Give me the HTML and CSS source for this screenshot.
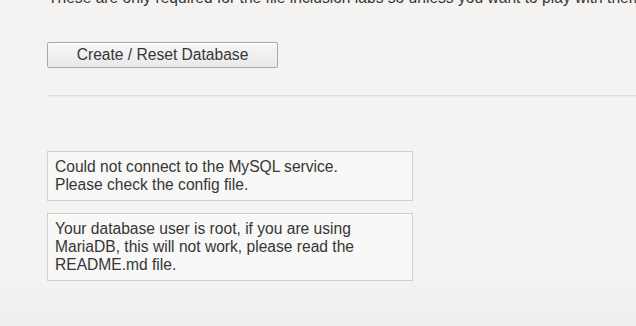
FILE: index.html
```html
<!DOCTYPE html>
<html lang="en">
<head>
    <meta charset="UTF-8">
    <title>Setup DVWA</title>
    <link rel="stylesheet" href="styles.css">
</head>
<body>
    <div class="body-padded">
        <p class="note">These are only required for the file inclusion labs so unless you want to play with them, you can ignore them.</p>

        <form class="setup-form">
            <button type="button" class="reset-button">Create / Reset Database</button>
        </form>

        <hr class="divider">

        <div class="messages">
            <div class="message">Could not connect to the MySQL service.<br>Please check the config file.</div>
            <div class="message">Your database user is root, if you are using MariaDB, this will not work, please read the README.md file.</div>
        </div>
    </div>
</body>
</html>
```

FILE: styles.css
```css
body {
    margin: 0;
    height: 326px;
    overflow: hidden;
    background: linear-gradient(#f4f3f2, #f4f3f2 85%, #efeeec);
    font-family: 'Liberation Sans', Arial, sans-serif;
    font-size: 15.6px;
    color: #363636;
}

.body-padded {
    padding-left: 47px;
}

/* page is scrolled so only the bottom of this line shows */
.note {
    margin: -11px 0 0 1px;
    white-space: nowrap;
    line-height: 18px;
}

.setup-form {
    margin-top: 35px;
}

.reset-button {
    width: 231px;
    height: 26px;
    padding: 0;
    font-family: inherit;
    font-size: 15.6px;
    color: #363636;
    background: linear-gradient(#f7f7f7, #e9e9e9);
    border: 1px solid #a9a9a9;
    border-radius: 2px;
    box-shadow: 0 1px 0 #fff inset;
}

.divider {
    margin: 27px 0 0;
    border: none;
    border-top: 1px solid #dcdcee;
    height: 1px;
    background: #ecebf3;
}

.messages {
    margin-top: 54px;
    width: 366px;
}

.message {
    box-sizing: border-box;
    padding: 6px 7px;
    margin-bottom: 12px;
    line-height: 18px;
    background: #f8f8f6;
    border: 1px solid #cfcfcd;
}
```
